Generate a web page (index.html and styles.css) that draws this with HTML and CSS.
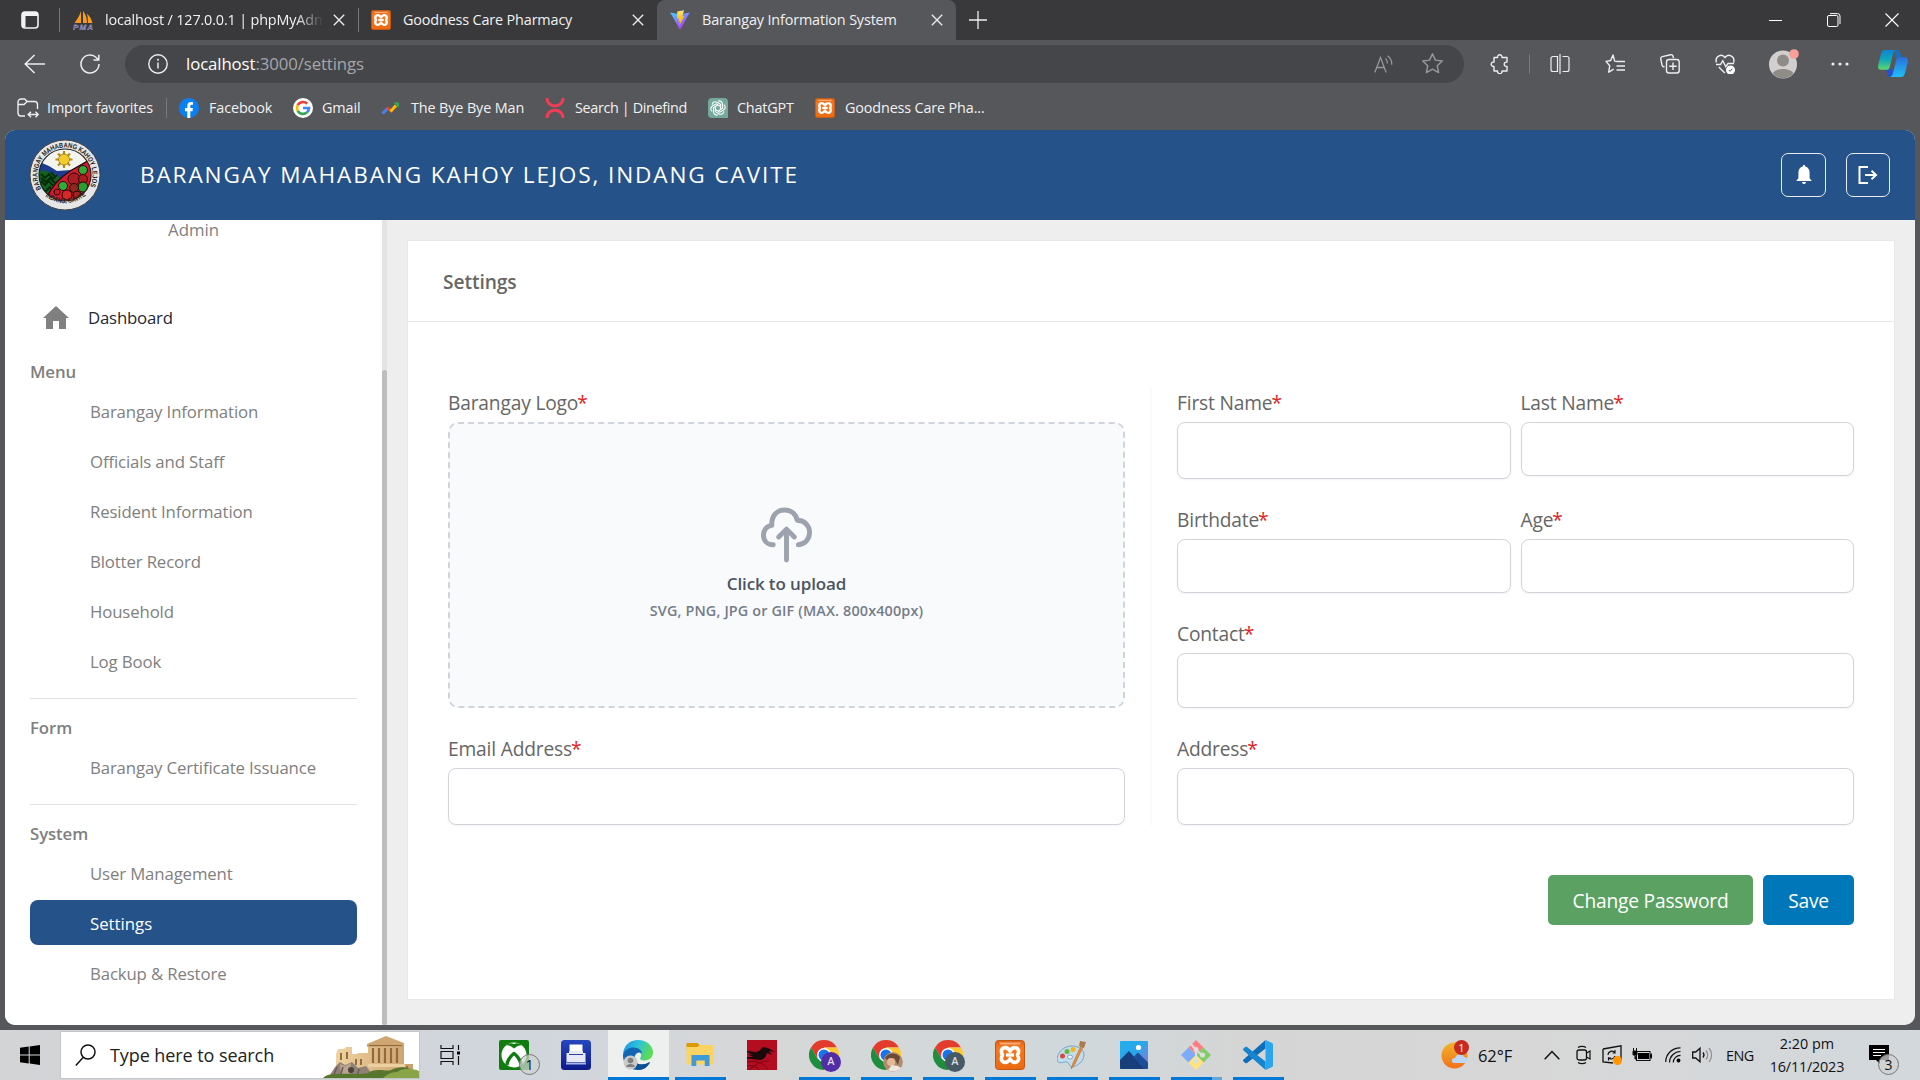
FILE: index.html
```html
<!DOCTYPE html>
<html lang="en">
<head>
<meta charset="utf-8">
<title>Barangay Information System</title>
<link rel="stylesheet" href="styles.css">
</head>
<body>
<svg class="defs" width="0" height="0" aria-hidden="true">
  <defs>
    <linearGradient id="orange" x1="0" y1="0" x2="0" y2="1"><stop offset="0" stop-color="#d9631a"/><stop offset=".25" stop-color="#f9781c"/><stop offset="1" stop-color="#ea6a14"/></linearGradient>
    <linearGradient id="vite" x1="0" y1="0" x2=".6" y2="1"><stop offset="0" stop-color="#41d1ff"/><stop offset="1" stop-color="#bd34fe"/></linearGradient>
    <linearGradient id="bolt" x1="0" y1="0" x2="0" y2="1"><stop offset="0" stop-color="#ffea83"/><stop offset=".4" stop-color="#ffcb20"/><stop offset="1" stop-color="#ffa800"/></linearGradient>
    <linearGradient id="edgeTop" x1="0" y1="0" x2="1" y2=".3"><stop offset="0" stop-color="#1b8fd8"/><stop offset=".5" stop-color="#2cc0e0"/><stop offset="1" stop-color="#5bdc55"/></linearGradient>
    <linearGradient id="photo" x1="0" y1="0" x2="1" y2="1"><stop offset="0" stop-color="#1fb0ef"/><stop offset=".5" stop-color="#2ba5e8"/><stop offset="1" stop-color="#a56bd0"/></linearGradient>
    <linearGradient id="sun" x1="0" y1="0" x2="0" y2="1"><stop offset="0" stop-color="#efb52c"/><stop offset="1" stop-color="#f3701a"/></linearGradient>
    <linearGradient id="copA" x1="0" y1="0" x2="0" y2="1"><stop offset="0" stop-color="#0e83d8"/><stop offset=".5" stop-color="#12a8b8"/><stop offset="1" stop-color="#62d86a"/></linearGradient>
    <linearGradient id="copB" x1="0" y1="0" x2="0" y2="1"><stop offset="0" stop-color="#2b6fdc"/><stop offset="1" stop-color="#1fc0f5"/></linearGradient>
    <linearGradient id="fax" x1="0" y1="0" x2="0" y2="1"><stop offset="0" stop-color="#2747bf"/><stop offset="1" stop-color="#0c1a86"/></linearGradient>
    <linearGradient id="stone" x1="0" y1="0" x2="1" y2="0"><stop offset="0" stop-color="#f0d3a0"/><stop offset="1" stop-color="#c8a070"/></linearGradient>
    <symbol id="xampp" viewBox="0 0 30 30">
      <rect x=".5" y=".5" width="29" height="29" rx="3" fill="url(#orange)" stroke="#c4570f"/>
      <path d="M4 2.500h22l-1.500 2h-19z" fill="#ffb98a" opacity=".8"/>
      <path d="M8.500 8c2.800-1 5 .5 6.500 3.200 1.500-2.700 3.700-4.200 6.500-3.200 3 1.300 2.300 5 1 7 1.300 2 2 5.700-1 7-2.800 1-5-.5-6.500-3.200-1.500 2.700-3.700 4.200-6.500 3.200-3-1.300-2.300-5-1-7-1.300-2-2-5.700 1-7z" fill="none" stroke="#fff" stroke-width="3.600" stroke-linejoin="round"/>
      <path d="M11 15h8" stroke="#fff" stroke-width="3.400"/>
    </symbol>
    <symbol id="chrome" viewBox="0 0 30 30">
      <path d="M2 7.500A15 15 0 0 1 28 7.500H15L8.500 18.700z" fill="#e33b2e"/>
      <path d="M28 7.500A15 15 0 0 1 15 30l6.500-11.300L15 7.500z" fill="#fcc934"/>
      <path d="M15 30A15 15 0 0 1 2 7.500l6.500 11.300H21.500z" fill="#1e8e3e"/>
      <circle cx="15" cy="15" r="7" fill="#fff"/><circle cx="15" cy="15" r="5.500" fill="#1a73e8"/>
    </symbol>
    <symbol id="closeX" viewBox="0 0 12 12"><path d="M.8.800l10.400 10.400M11.200.800L.8 11.200" stroke="#e8e8e8" stroke-width="1.400"/></symbol>
  </defs>
</svg>

<div class="screen">
  <div class="tabstrip">
    <svg class="tab-menu" viewBox="0 0 18 18"><rect x="1" y="1" width="16" height="16" rx="3" fill="none" stroke="#f2f2f2" stroke-width="1.600"/><path d="M1 3a2 2 0 0 1 2-2h12a2 2 0 0 1 2 2v2H1zM1 5h3.500v11H1z" fill="#f2f2f2"/></svg>
    <div class="tab tab-1">
      <svg class="fav" viewBox="0 0 20 20"><path d="M8 1v12H1.500C4 9 6.500 6 8 1zM10 1c3 3.500 4 8 4 12h-4zM14 3.500c3 3 4.500 6 5.500 9.500h-4.500c0-4-.4-6-1-9.500z" fill="#f89c1c"/><text x="0" y="19.500" class="pma" textLength="20">PMA</text></svg>
      <span class="tab-title faded">localhost / 127.0.0.1 | phpMyAdmin</span>
      <svg class="x"><use href="#closeX"/></svg>
    </div>
    <div class="tab tab-2">
      <svg class="fav"><use href="#xampp"/></svg>
      <span class="tab-title">Goodness Care Pharmacy</span>
      <svg class="x"><use href="#closeX"/></svg>
    </div>
    <div class="tab tab-3">
      <svg class="fav" viewBox="0 0 20 20"><path d="M.2 2.500l9.800 17.300L19.800 2.500 10 4.200z" fill="url(#vite)"/><path d="M14 .2L7.300 1.500 7 8.800l2-.4-.6 3 1.500-.4-.7 4.600L14.500 6l-2.200.4z" fill="url(#bolt)"/></svg>
      <span class="tab-title">Barangay Information System</span>
      <svg class="x"><use href="#closeX"/></svg>
    </div>
    <svg class="plus" viewBox="0 0 18 18"><path d="M9 0v18M0 9h18" stroke="#eee" stroke-width="1.300"/></svg>
    <div class="winbtns">
      <svg viewBox="0 0 14 14"><path d="M0 7.500h13" stroke="#fff" stroke-width="1"/></svg>
      <svg viewBox="0 0 14 14"><rect x=".5" y="2.500" width="10.500" height="11" rx="1.500" fill="none" stroke="#fff"/><path d="M3 .6h7.500a2.500 2.500 0 0 1 2.500 2.500v8" fill="none" stroke="#fff"/></svg>
      <svg viewBox="0 0 14 14"><path d="M.5.500l13 13M13.500.500l-13 13" stroke="#fff" stroke-width="1.100"/></svg>
    </div>
  </div>

  <div class="toolbar">
    <svg class="back" viewBox="0 0 21 20"><path d="M21 10H1.200M10.500 1L1.200 10l9.300 9" fill="none" stroke="#eee" stroke-width="1.500"/></svg>
    <svg class="reload" viewBox="0 0 20 20"><path d="M19 10a9 9 0 1 1-2.800-6.500l2.300 2.200M18.800.800v5.200h-5.300" fill="none" stroke="#eee" stroke-width="1.500"/></svg>
    <div class="address">
      <svg class="info" viewBox="0 0 20 20"><circle cx="10" cy="10" r="9.200" fill="none" stroke="#eee" stroke-width="1.400"/><path d="M10 8.500v6" stroke="#eee" stroke-width="1.500"/><circle cx="10" cy="5.800" r="1" fill="#eee"/></svg>
      <span class="url"><b>localhost</b>:3000/settings</span>
      <svg class="aloud" viewBox="0 0 19 18"><path d="M.8 17.500L6.500 2.500l5.700 15M2.800 12.500h7.500M11.500 3.500c1.500 1.200 2 3 1.900 5M13.500.700c3 2 4.500 5 4.200 9" fill="none" stroke="#96979a" stroke-width="1.300"/></svg>
      <svg class="star" viewBox="0 0 20 20"><path d="M10 .8l2.800 6 6.500.8-4.800 4.500 1.300 6.500-5.800-3.200-5.800 3.200 1.300-6.500L.7 7.600l6.500-.8z" fill="none" stroke="#96979a" stroke-width="1.400" stroke-linejoin="round"/></svg>
    </div>
    <div class="tools">
      <div class="tool puzzle"><svg viewBox="0 0 20 20"><path d="M4 3.500h3.500a2.300 2.300 0 1 1 4.500 0h5V8a2.300 2.300 0 1 0 0 4.500v4.500H12a2.300 2.300 0 1 1-4.500 0H4V12.500a2.300 2.300 0 1 1 0-4.500z" fill="none" stroke="#eee" stroke-width="1.400" stroke-linejoin="round"/></svg></div>
      <div class="tool split"><svg viewBox="0 0 20 20"><path d="M7.500 2.500H3a2 2 0 0 0-2 2v11a2 2 0 0 0 2 2h4.500zM12.500 2.500H17a2 2 0 0 1 2 2v11a2 2 0 0 1-2 2h-4.500M10 0v20" fill="none" stroke="#eee" stroke-width="1.200"/></svg></div>
      <div class="tool"><svg viewBox="0 0 20 20"><path d="M12.500 7.500l-2.800-.4L8 1 5.700 6.500 1 7.400l3.700 4.400-1 6.400 5-3M12.500 7.500H20M11.500 12H20M11.500 16H20" fill="none" stroke="#eee" stroke-width="1.400" stroke-linejoin="round"/></svg></div>
      <div class="tool"><svg viewBox="0 0 20 20"><path d="M4.500 13L3 12.500a2 2 0 0 1-1-1.500L.8 5a2 2 0 0 1 1.500-2.400L10.500.800A2 2 0 0 1 13 2.200l.4 2" fill="none" stroke="#eee" stroke-width="1.400"/><rect x="6.500" y="5.500" width="12.700" height="13.500" rx="2.500" fill="none" stroke="#eee" stroke-width="1.400"/><path d="M13 8.500v7.500M9.200 12.200h7.500" stroke="#eee" stroke-width="1.400"/></svg></div>
      <div class="tool"><svg viewBox="0 0 20 20"><path d="M1.300 8.500C-.2 1.500 7-.8 10 3.500c3-4.300 10.200-2 8.700 5M1 10.500h4.500l2.300-3.800 3 6L13 9.500h6M3.800 13l6 6" fill="none" stroke="#eee" stroke-width="1.400"/><circle cx="15.500" cy="16" r="4.500" fill="#fff"/><path d="M13.800 16l1.300 1.300 2.200-2.600" stroke="#555" fill="none"/></svg></div>
      <div class="tool person"><svg viewBox="0 0 32 30"><circle cx="15" cy="15.500" r="14" fill="#d2d0ce"/><circle cx="15" cy="11.500" r="6" fill="#8f8b87"/><path d="M4.500 24.500C7 18.500 23 18.500 25.500 24.500a14 14 0 0 1-21 0z" fill="#8f8b87"/><circle cx="26" cy="5" r="4.800" fill="#f99f9a"/></svg></div>
      <div class="tool"><svg viewBox="0 0 20 20"><g fill="#eee"><circle cx="3" cy="10" r="1.600"/><circle cx="10" cy="10" r="1.600"/><circle cx="17" cy="10" r="1.600"/></g></svg></div>
      <div class="tool copilot"><svg viewBox="0 0 30 27"><path d="M17 0h2c2 0 3 1 3.500 4l1 4h-6z" fill="#176fc0"/><path d="M8 19h6l3 8h-4c-2 0-3-1-3.500-3z" fill="#2450d0"/><path d="M7 0h11c-2 1-2.500 2-3 4l-3.300 13c-.5 2-1.500 2.800-3 2.800H3C.5 19.800-.3 18 .2 15L3 4c.7-2.800 2-4 4-4z" fill="url(#copA)"/><path d="M23 27H12c2-1 2.500-2 3-4l3.300-13c.5-2 1.500-2.800 3-2.800H27c2.500 0 3.300 1.800 2.800 4.800L27 23c-.7 2.800-2 4-4 4z" fill="url(#copB)"/></svg></div>
    </div>
  </div>

  <div class="bookmarks">
    <div class="bm bm-import"><svg viewBox="0 0 22 20"><path d="M8 18H4a3 3 0 0 1-3-3V4a3 3 0 0 1 3-3h3.500l3 2.500h7a3 3 0 0 1 3 3V11M1 6.500h6l3-3M12 16.500h9M14 13.700l-2.800 2.800 2.800 2.800M18.500 13.700l2.800 2.800-2.800 2.800" fill="none" stroke="#eee" stroke-width="1.400"/></svg><span>Import favorites</span></div>
    <div class="bm bm-fb"><svg viewBox="0 0 20 20"><circle cx="10" cy="10" r="10" fill="#0a80f5"/><path d="M8.300 20v-6.800H6V10h2.300V8c0-2.600 1.400-4 3.700-4l2 .2v2.600h-1.200c-1.200 0-1.500.7-1.500 1.500V10h2.600l-.4 3.200h-2.200V20z" fill="#fff"/></svg><span>Facebook</span></div>
    <div class="bm bm-gmail"><svg viewBox="0 0 20 20"><circle cx="10" cy="10" r="10" fill="#fff"/><g fill="none" stroke-width="2.700"><path d="M14.200 5.700A6 6 0 0 0 4.700 7.200" stroke="#ea4335"/><path d="M4.700 7.200a6 6 0 0 0 0 5.600" stroke="#fbbc05"/><path d="M4.700 12.800a6 6 0 0 0 9.200 1.700" stroke="#34a853"/><path d="M13.900 14.500A6 6 0 0 0 16 10h-6" stroke="#4285f4"/></g></svg><span>Gmail</span></div>
    <div class="bm bm-bye"><svg viewBox="0 0 20 20"><path d="M1.500 15.500L7 10" stroke="#4285f4" stroke-width="3"/><path d="M6 9.500l4.500 4" stroke="#ea4335" stroke-width="3"/><path d="M9.500 13.500L15 7.500" stroke="#fbbc05" stroke-width="3"/><path d="M12.500 4.500H18V10z" fill="#34a853"/></svg><span>The Bye Bye Man</span></div>
    <div class="bm bm-dine"><svg viewBox="0 0 20 20"><path d="M2 0c0 10.500 16 10.500 16 0M2 20C2 9.500 18 9.500 18 20" fill="none" stroke="#f43b55" stroke-width="3"/></svg><span>Search | Dinefind</span></div>
    <div class="bm bm-gpt"><svg viewBox="0 0 20 20"><path d="M4 0h12a4 4 0 0 1 4 4v16H4a4 4 0 0 1-4-4V4a4 4 0 0 1 4-4z" fill="#74aa9c"/><g fill="none" stroke="#fff" stroke-width="1.100"><path id="petal" d="M10 3.200a3.200 3.200 0 0 1 4.500 3V10.500l-4 2.300"/><use href="#petal" transform="rotate(60 10 10)"/><use href="#petal" transform="rotate(120 10 10)"/><use href="#petal" transform="rotate(180 10 10)"/><use href="#petal" transform="rotate(240 10 10)"/><use href="#petal" transform="rotate(300 10 10)"/></g></svg><span>ChatGPT</span></div>
    <div class="bm bm-xampp"><svg><use href="#xampp"/></svg><span>Goodness Care Pha...</span></div>
  </div>

  <div class="page">
    <header class="header">
      <svg class="seal" viewBox="0 0 72 72">
        <defs><clipPath id="sealClip"><circle cx="36" cy="36" r="26"/></clipPath><path id="arcTop" d="M12.300 50A27.500 27.500 0 1 1 59.700 50"/><path id="arcBottom" d="M9.500 50A32 32 0 0 0 62.500 50"/></defs>
        <circle cx="36" cy="36" r="35" fill="#e6e6e6" stroke="#444" stroke-width="1"/>
        <g clip-path="url(#sealClip)">
          <rect width="72" height="72" fill="#f4f4ef"/>
          <path d="M8 22l12 5 8 5 14-1-6 20H8z" fill="#1d3c8f"/>
          <path d="M8 34l6-3 14 5 6 6-10 24L8 60z" fill="#14601f"/>
          <path d="M12 35l4 4 4-4 4 5 4-4M12 42l4 4 4-4 4 5 5-5M12 49l4 4 5-5 3 5M22 33l4 5M12 39l5 4 4-4 5 5" stroke="#052a0a" stroke-width="1.800" fill="none"/>
          <path d="M16 64c3-14 12-24 25-32l22-13v50z" fill="#d21c2b"/>
          <path d="M17 60c5-12 12-20 24-28l21-12" stroke="#111" stroke-width="1.200" fill="none"/>
          <g stroke="#260909" stroke-width="1"><circle cx="45" cy="40" r="6" fill="#a81c22"/><circle cx="34" cy="47" r="4.500" fill="#2fae35"/><circle cx="54" cy="31" r="4.500" fill="#31a936"/><circle cx="54" cy="40" r="4.500" fill="#a71f20"/><circle cx="54" cy="48" r="5" fill="#2b9e31"/><circle cx="45" cy="49" r="4.500" fill="#8e2a1d"/><circle cx="38" cy="56" r="5" fill="#d42928"/><circle cx="28" cy="53" r="3" fill="#c61a22"/><circle cx="48" cy="56" r="4" fill="#a5221e"/></g>
          <g stroke="#b18c0e" stroke-width="2.200"><path d="M35 12v17M26.500 20.500h17M29 14.500l12 12M41 14.500l-12 12"/></g><circle cx="35" cy="20.500" r="5.500" fill="#f2cc2d" stroke="#8d7013" stroke-width=".7"/>
        </g>
        <circle cx="36" cy="36" r="26" fill="none" stroke="#222" stroke-width="1.200"/>
        <text class="seal-text"><textPath href="#arcTop" textLength="112" lengthAdjust="spacingAndGlyphs">BARANGAY MAHABANG KAHOY LEJOS</textPath></text>
        <text class="seal-text"><textPath href="#arcBottom" startOffset="10" textLength="44" lengthAdjust="spacingAndGlyphs">INDANG, CAVITE</textPath></text>
      </svg>
      <h1>BARANGAY MAHABANG KAHOY LEJOS, INDANG CAVITE</h1>
      <div class="hbtn hbtn-bell"><svg viewBox="0 0 16 20"><path d="M8 0c.9 0 1.300.6 1.300 1.500 2.800.7 4.300 3 4.300 6.200v5.500L15.800 16H.2l2.200-2.800V7.700c0-3.200 1.500-5.500 4.300-6.200C6.700.600 7.100 0 8 0zM6 17h4c0 1.300-.8 2-2 2s-2-.7-2-2z" fill="#fff"/></svg></div>
      <div class="hbtn"><svg class="exit" viewBox="0 0 20 18"><path d="M10 1H1.500v16H10M7 9h11M13.500 4.800L18 9l-4.500 4.200" fill="none" stroke="#fff" stroke-width="2"/></svg></div>
    </header>
    <div class="body">
      <aside class="sidebar">
        <nav>
          <p class="role">Admin</p>
          <a class="dash"><svg viewBox="0 0 26 23"><path d="M13 0L26 12h-3v11h-7v-8h-6v8H3V12H0z" fill="#808080"/></svg><span>Dashboard</span></a>
          <h2>Menu</h2>
          <a class="item">Barangay Information</a>
          <a class="item">Officials and Staff</a>
          <a class="item">Resident Information</a>
          <a class="item">Blotter Record</a>
          <a class="item">Household</a>
          <a class="item">Log Book</a>
          <hr>
          <h2>Form</h2>
          <a class="item">Barangay Certificate Issuance</a>
          <hr>
          <h2>System</h2>
          <a class="item">User Management</a>
          <a class="item active">Settings</a>
          <a class="item">Backup &amp; Restore</a>
        </nav>
        <div class="scroll"><div class="thumb"></div></div>
      </aside>
      <main>
        <section class="card">
          <div class="card-head">Settings</div>
          <div class="form">
            <div class="col">
              <label>Barangay Logo<i>*</i></label>
              <div class="drop">
                <svg viewBox="0 0 52 56"><g fill="none" stroke="#9ca3af" stroke-width="5" stroke-linecap="round" stroke-linejoin="round"><path d="M12.500 38C6 38 2.500 33.500 2.500 28c0-5 3.500-9.500 8.500-9.800C10.500 8.500 16 2.500 24 2.500c6.500 0 11.500 4 13 10.500C44 13 49.500 18 49.500 25.500c0 6.500-4.500 12-11.500 12.500"/><path d="M26 53.500V23M18 30l8-8 8 8"/></g></svg>
                <strong>Click to upload</strong>
                <small>SVG, PNG, JPG or GIF (MAX. 800x400px)</small>
              </div>
              <label class="l-last">Email Address<i>*</i></label>
              <div class="input h57"></div>
            </div>
            <div class="rule"></div>
            <div class="col">
              <div class="pair">
                <div><label>First Name<i>*</i></label><div class="input h57"></div></div>
                <div><label>Last Name<i>*</i></label><div class="input h54"></div></div>
              </div>
              <div class="pair second">
                <div><label>Birthdate<i>*</i></label><div class="input h54"></div></div>
                <div><label>Age<i>*</i></label><div class="input h54"></div></div>
              </div>
              <label class="l-contact">Contact<i>*</i></label>
              <div class="input h55"></div>
              <label class="l-last">Address<i>*</i></label>
              <div class="input h57"></div>
            </div>
          </div>
          <div class="actions"><button class="green">Change Password</button><button class="blue">Save</button></div>
        </section>
      </main>
    </div>
  </div>

  <div class="taskbar">
    <div class="start"><svg viewBox="0 0 20 20"><path d="M0 2.800L8.700 1.500v8H0zM9.700 1.400L20 0v9.500H9.700zM0 10.500h8.700v8L0 17.200zM9.700 10.500H20V20L9.700 18.600z"/></svg></div>
    <div class="search">
      <svg class="mag" viewBox="0 0 21 22"><circle cx="13" cy="8" r="7" fill="none" stroke="#111" stroke-width="1.500"/><path d="M8.300 13.200L.8 21.400" stroke="#111" stroke-width="1.500"/></svg>
      <span>Type here to search</span>
      <svg class="acro" viewBox="0 0 96 42"><path d="M13 30V18l2-5h6l2-2h6v7h4l3-1h9V9L63 2l18 7v19h9v12H13z" fill="url(#stone)"/><path d="M44 8L63 0l18 7v4H44z" fill="#cfa672"/><path d="M46 9.500h33" stroke="#8f683a" stroke-width="1"/><path d="M50 12v15M56 12v15M62 12v15M68 12v15M74 12v15" stroke="#94693a" stroke-width="2.200"/><path d="M38 23v6M33 23v6M18 17v7M24 16v7M84 30v6" stroke="#936c42" stroke-width="2"/><path d="M45 28h37v3H45z" fill="#ecd0a0"/><path d="M5 42l7-11 5-5 5 3 7-3 6 6 8-2 6 8v4z" fill="#8f8178"/><path d="M17 28l5 2 6-3-2 13h-8z" fill="#bba48f"/><circle cx="28" cy="34" r="3" fill="#4d413b"/><path d="M14 31l-4 10M20 31l-3 10M36 33l-2 8" stroke="#675b54" stroke-width="1.500"/><path d="M0 42c3-4 11-4 15-4 10-1 21 1 30-1 8-6 18-1 23-3 9-4 17-4 28 4v4z" fill="#56752d"/><path d="M60 42c3-3 8-6 14-6 8-5 17-3 22-1v7z" fill="#8aa548"/></svg>
    </div>
    <div class="taskview"><svg viewBox="0 0 20 20"><path d="M1 0v3.500h12V0M1 20v-3.500h12V20M1 6.500h12v7H1zM18.500 0v5M18.500 11v9" fill="none" stroke="#111" stroke-width="1.200"/><rect x="17" y="6.500" width="3" height="3"/></svg></div>
    <div class="apps">
      <div class="app"><svg viewBox="0 0 30 30"><rect width="30" height="30" rx="2" fill="#107c10"/><circle cx="15" cy="15" r="12.500" fill="#fff"/><path d="M15 8.500C11.500 5.500 8.500 4.500 6.500 5.500c2.500-2.500 6-3 8.500-1.500 2.500-1.500 6-1 8.500 1.500-2-1-5 0-8.500 3zM15 11.500c5 3.500 9 9 8.500 13l-3 1C20 21 17 17.500 15 15.500c-2 2-5 5.500-5.500 10l-3-1c-.5-4 3.500-9.500 8.500-13z" fill="#107c10"/></svg><b class="count">1</b></div>
      <div class="app"><svg viewBox="0 0 30 30"><rect width="30" height="30" rx="3.500" fill="url(#fax)"/><path d="M8.500 4.500h13v9h-13z" fill="#fff"/><path d="M5.500 13h19v9h-19zM8 11h14v5H8z" fill="#e7eaf6"/><path d="M5 22.500h20v2H5z" fill="#a9b5e6"/><path d="M8 14.500h14" stroke="#2943a5"/></svg></div>
      <div class="app run current"><svg viewBox="0 0 30 30"><path d="M0 14C1 5 7 0 15 0c9 0 15 6 15 12.500 0 5-4 8-8.500 8-4 0-5-1.500-4-3 2-3-1-8-7-8C5 9.500 2 12 0 14z" fill="url(#edgeTop)"/><path d="M0 15c1-5 6-7.500 10.500-7.500 5 0 8.500 3 8.500 6-2-2-7-1-7.500 4C11 24 18 27 27 22c-2 5-7 8-12 8C6 30-.5 23 0 15z" fill="#1267b5"/><path d="M11.500 17.500C11 24 18 27 27 22c-2 5-7 8-12 8-5-2-6-8-3.500-12.500z" fill="#0c4f93"/><circle cx="7.500" cy="22.500" r="7" fill="#c9c9c9"/><circle cx="7.500" cy="20.500" r="2.800" fill="#7e7e7e"/><path d="M3 27c1-4 8-4 9 0z" fill="#7e7e7e"/></svg></div>
      <div class="app run"><svg viewBox="0 0 30 30"><path d="M1.500 3h11l3 3-3 3h-11z" fill="#dd9a06"/><path d="M1.500 7h11l2-2h14v19.500h-27z" fill="#fdd363"/><path d="M6.500 26V15h18v11h-4.700v-5.500h-8.500V26z" fill="#3e9ad9"/></svg></div>
      <div class="app"><svg viewBox="0 0 30 30"><rect width="30" height="30" fill="#b50d20"/><path d="M0 11c5 0 8 2 12 0l4-4 5 1 7 4-6-1 3 4-5-2c-1 3-2 6-6 7-5 0-9-2-14-1v-2l6 0-6-3 6 1-6-3z" fill="#19090b"/><path d="M0 22c8-2 17 0 21 8M0 26c6-1 10 1 12 4M2 30c8-6 10-9 20-9" stroke="#760614" fill="none"/></svg></div>
      <div class="app run"><svg><use href="#chrome"/></svg><b class="profile purple">A</b></div>
      <div class="app run"><svg><use href="#chrome"/></svg><svg class="profile" viewBox="0 0 20 20"><circle cx="10" cy="10" r="10" fill="#b08d70"/><path d="M2 6a9 9 0 0 1 15-1l-2 8-4-7-6 3z" fill="#6b4a36"/><circle cx="8" cy="10" r="4" fill="#e5b794"/><path d="M5 18l4-5 6 1 3 2a10 10 0 0 1-13 2z" fill="#f0e6df"/></svg></div>
      <div class="app run"><svg><use href="#chrome"/></svg><b class="profile slate">A</b></div>
      <div class="app run"><svg><use href="#xampp"/></svg></div>
      <div class="app run"><svg viewBox="0 0 30 30"><path d="M15 6c7 0 12 4 12 9 0 6-6 11-12 12-3 0-2-4-5-5-3-.5-9 3-10-2C0 12 7 6 15 6z" fill="#c2dcee" stroke="#76a5c5"/><ellipse cx="13" cy="17" rx="2.500" ry="2" fill="#eef5f9" stroke="#83aac2"/><circle cx="5.500" cy="16" r="2.500" fill="#dc4740"/><circle cx="10" cy="11.500" r="2.500" fill="#62b73c"/><circle cx="16" cy="9.500" r="2.500" fill="#f2b51c"/><path d="M14 29l2-6 8-17 2 1-8 17z" fill="#eb8a2f" stroke="#b66018" stroke-width=".5"/><path d="M22 6l1-5 6 1-2 6z" fill="#a97b4e"/></svg></div>
      <div class="app run"><svg viewBox="0 0 30 30"><rect x="1" y="1" width="28" height="28" rx="1" fill="url(#photo)"/><path d="M1 20l9-9 16 18H2a1 1 0 0 1-1-1z" fill="#173f7c"/><path d="M15 16.500l4-4 10 10v5.500a1 1 0 0 1-1 1h-3z" fill="#1b4e96"/><circle cx="19.500" cy="7.500" r="2.600" fill="#fff"/></svg></div>
      <div class="app run multi"><svg viewBox="0 0 30 30"><path d="M15 0l7.500 7.500L15 15 7.500 7.500z" fill="#fb7f80"/><path d="M22.500 7.500L30 15l-7.500 7.500L15 15z" fill="#82ce66"/><path d="M7.500 7.500L15 15l-7.500 7.500L0 15z" fill="#7cabfb"/><path d="M15 15l7.500 7.500L15 30l-7.500-7.500z" fill="#ffe37c"/><path d="M10 4l5 6v11M15 10l6 5" stroke="#dedede" stroke-width="2" fill="none"/><g fill="#dedede"><circle cx="15" cy="9.500" r="2.500"/><circle cx="15" cy="21" r="2.500"/><circle cx="21.500" cy="15" r="2.500"/></g></svg></div>
      <div class="app run"><svg viewBox="0 0 30 30"><path d="M22.500 0v8.500L4 23c-.6.500-1.300.4-1.800 0L.5 21.500c-.6-.6-.6-1.400 0-2z" fill="#0e6fb8"/><path d="M22.500 30v-8.500L4 7c-.6-.5-1.300-.4-1.800 0L.5 8.500c-.6.600-.6 1.400 0 2z" fill="#1585cf"/><path d="M22.500 0L29 3c.6.300 1 .8 1 1.500v21c0 .7-.4 1.200-1 1.500l-6.500 3z" fill="#2aa5ee"/></svg></div>
    </div>
    <div class="tray">
      <svg class="weather" viewBox="0 0 30 30"><circle cx="13.500" cy="15.500" r="13" fill="url(#sun)"/><path d="M13 23c-3 0-3-5 1-5 2-5 8-5 9-1 4-1 5 6 1 6z" fill="#bcd5f8"/><circle cx="20.500" cy="7.500" r="7.500" fill="#c92a20"/><text x="20.500" y="12" class="wnum">1</text></svg>
      <span class="temp">62°F</span>
      <svg class="chev" viewBox="0 0 16 10"><path d="M.7 9.200L8 1.500l7.300 7.700" fill="none" stroke="#111" stroke-width="1.500"/></svg>
      <svg class="cam" viewBox="0 0 15 20"><rect x="1" y="5" width="9.500" height="10" rx="2" fill="none" stroke="#111" stroke-width="1.300"/><path d="M10.500 8l3.500-2v8l-3.500-2M2 2.500c2-1.500 6-1.500 8 0M2 17.500c2 1.500 6 1.500 8 0" fill="none" stroke="#111" stroke-width="1.200"/></svg>
      <svg class="upd" viewBox="0 0 20 20"><path d="M1 4L19 .8v15M1 4v13l10 1" fill="none" stroke="#111" stroke-width="1.300"/><path d="M6 10a4 4 0 0 1 7-2.500V5M13 8h-2.500M13 11a4 4 0 0 1-6.500 2v2.500M6.500 13H9" fill="none" stroke="#111" stroke-width="1.100"/><circle cx="15.500" cy="15.500" r="4.500" fill="#ff9500"/></svg>
      <svg class="bat" viewBox="0 0 20 14"><rect x="4.500" y="3.500" width="13.500" height="9" fill="none" stroke="#111"/><rect x="6" y="5" width="11" height="6"/><path d="M18.500 6h1.500v4h-1.500zM1 3h4v4H1zM1.500 0v3M4.500 0v3M3 7v4h2" stroke="#111"/></svg>
      <svg class="wifi" viewBox="0 0 16 16"><path d="M.7 15A14.300 14.300 0 0 1 15.500.8M4.500 15.500A11 11 0 0 1 15.500 4.500M8.300 15.500a7.300 7.300 0 0 1 7.200-7.200" fill="none" stroke="#111" stroke-width="1.200"/><circle cx="13.500" cy="13.500" r="1.900"/></svg>
      <svg class="vol" viewBox="0 0 21 18"><path d="M.7 6h3L8 2.200v13.600L3.700 12h-3zM11 6.500c1.200 1.500 1.200 3.500 0 5" fill="none" stroke="#111" stroke-width="1.300"/><path d="M14 4.500c2.200 2.500 2.200 6.500 0 9M17 2c3.400 4 3.400 10 0 14" fill="none" stroke="#8d8d8d" stroke-width="1.200"/></svg>
      <span class="lang">ENG</span>
      <div class="clock"><span class="time">2:20 pm</span><span class="date">16/11/2023</span></div>
      <div class="notif"><svg viewBox="0 0 20 19"><path d="M0 0h20v15h-9v4l-4-4H0z"/><path d="M4 4.500h12M4 7.500h12M4 10.500h8" stroke="#fff" stroke-width="1.200"/></svg><b class="count">3</b></div>
    </div>
  </div>
</div>
</body>
</html>
```
FILE: styles.css
```css
* { box-sizing: border-box; }
body { margin: 0; font-family: "Open Sans", "Noto Sans", sans-serif; background: #56575b; }
svg { display: block; flex: none; }
.defs { position: absolute; }
p, h1, h2, hr { margin: 0; }
.screen { width: 1920px; height: 1080px; overflow: hidden; display: flex; flex-direction: column; white-space: nowrap; }

/* tab strip */
.tabstrip { height: 40px; background: #39393c; display: flex; align-items: center; flex: none; color: #f1f1f1; font-size: 14.4px; }
.tab-menu { width: 18px; height: 18px; margin: 0 20px 0 21px; }
.tab { display: flex; align-items: center; height: 40px; }
.tab-1, .tab-2 { background: linear-gradient(#77777a, #77777a) left center / 1px 24px no-repeat; }
.tab-1 { width: 299px; padding-left: 14px; }
.tab-2 { width: 299px; padding-left: 13px; }
.tab-3 { width: 299px; padding-left: 13px; background: #56575b; border-radius: 8px 8px 0 0; }
.fav { width: 20px; height: 20px; margin-right: 12px; }
.tab-title { width: 229px; overflow: hidden; letter-spacing: -.15px; line-height: 24px; }
.tab-1 .tab-title { width: 218px; margin-right: 10px; }
.faded { -webkit-mask: linear-gradient(90deg, #000 88%, transparent); mask: linear-gradient(90deg, #000 88%, transparent); }
.x { width: 12px; height: 12px; }
.plus { width: 18px; height: 18px; margin-left: 13px; }
.pma { font: italic bold 8px "Liberation Sans", sans-serif; fill: #4b4b93; stroke: #c9c9e6; stroke-width: .3px; }
.winbtns { margin-left: auto; margin-right: 21px; display: flex; gap: 44px; }
.winbtns svg { width: 14px; height: 14px; }

/* toolbar */
.toolbar { height: 46px; display: flex; align-items: center; flex: none; padding: 1px 0 0 24px; }
.back { width: 21px; height: 20px; margin-right: 35px; }
.reload { width: 20px; height: 20px; margin-right: 25px; }
.address { width: 1339px; height: 38px; border-radius: 19px; background: #454649; display: flex; align-items: center; padding: 0 21px 0 23px; }
.info { width: 20px; height: 20px; margin-right: 18px; }
.url { font-size: 16.8px; color: #a6a7a9; flex: 1; letter-spacing: -.1px; padding-bottom: 1px; }
.url b { font-weight: 400; color: #fff; }
.aloud { width: 19px; height: 18px; margin-right: 29px; }
.star { width: 21px; height: 21px; }
.tools { display: flex; align-items: center; padding-left: 8px; }
.tool { width: 55px; display: flex; justify-content: center; }
.tool svg { width: 20px; height: 20px; }
.tool.puzzle { width: 58px; padding-right: 3px; background: linear-gradient(#77787b, #77787b) right center / 1px 20px no-repeat; }
.tool.split { width: 57px; padding-left: 2px; }
.tool.person { width: 60px; }
.tool.person svg { width: 32px; height: 30px; margin-left: 4px; }
.tool.copilot { width: 52px; }
.tool.copilot svg { width: 30px; height: 27px; }

/* favourites bar */
.bookmarks { height: 44px; display: flex; align-items: center; flex: none; padding: 0 0 1px 17px; color: #f1f1f1; font-size: 14.4px; letter-spacing: -.12px; }
.bm { display: flex; align-items: center; }
.bm svg { width: 20px; height: 20px; margin-right: 10px; }
.bm-import { width: 150px; background: linear-gradient(#77787b, #77787b) right center / 1px 20px no-repeat; margin-right: 12px; }
.bm-import svg { width: 22px; margin-right: 8px; }
.bm-fb { width: 114px; }
.bm-gmail { width: 88px; }
.bm-gmail svg { margin-right: 9px; }
.bm-bye { width: 164px; }
.bm-dine { width: 163px; }
.bm-gpt { width: 107px; }
.bm-dine, .bm-gpt { letter-spacing: -.2px; }
.bm-dine { letter-spacing: -.36px; }
.bm-gpt svg { margin-right: 9px; }
.bm-xampp { letter-spacing: -.15px; }

/* web page */
.page { height: 895px; margin: 0 5px; border-radius: 10px; overflow: hidden; background: #eee; display: flex; flex-direction: column; flex: none; }
.header { height: 90px; background: #255288; display: flex; align-items: center; padding: 0 25px 0 24px; flex: none; }
.seal { width: 72px; height: 72px; margin-right: 39px; }
.seal-text { font: bold 7px "Liberation Sans", sans-serif; fill: #222; }
h1 { flex: 1; color: #fff; font-weight: 400; font-size: 22.6px; letter-spacing: 1.870px; line-height: 32px; }
.hbtn { width: 44px; height: 44px; border: 1.250px solid #e8edf3; border-radius: 7px; display: flex; align-items: center; justify-content: center; }
.hbtn-bell { width: 45px; margin-right: 20px; }
.hbtn svg { width: 16px; height: 20px; }
.hbtn .exit { width: 20px; height: 18px; }
.body { flex: 1; display: flex; min-height: 0; }

.sidebar { width: 382px; display: flex; background: #fff; }
nav { width: 377px; padding: 0 25px; color: #808080; font-size: 16.8px; display: flex; flex-direction: column; }
.role { height: 74px; line-height: 20px; text-align: center; }
.dash { height: 49px; display: flex; align-items: center; padding: 0 0 3px 13px; color: #1f2937; letter-spacing: -.2px; }
.dash svg { width: 26px; height: 23px; margin-right: 19px; }
h2 { font-size: 16.8px; font-weight: 600; height: 45px; padding-top: 12px; line-height: 33px; letter-spacing: -.1px; }
.item { height: 45px; margin-bottom: 5px; padding: 1px 0 0 60px; line-height: 45px; border-radius: 8px; letter-spacing: -.14px; }
.item.active { background: #255288; color: #fff; letter-spacing: 0; }
hr { border: 0; height: 1px; background: #e2e2e2; margin-top: 10px; }
.scroll { width: 5px; background: #e4e4e4; padding-top: 150px; display: flex; }
.thumb { flex: 1; background: #bdbdbd; border-radius: 3px; }

main { flex: 1; padding: 20px 20px 25px 20px; display: flex; }
.card { flex: 1; background: #fff; border: 1px solid #e5e7eb; display: flex; flex-direction: column; }
.card-head { height: 81px; border-bottom: 1px solid #e5e7eb; padding-left: 35px; font-size: 19.200px; font-weight: 600; color: #666; line-height: 82px; letter-spacing: -.1px; }
.form { display: flex; padding: 65px 40px 0; height: 503px; }
.col { width: 677px; display: flex; flex-direction: column; }
.rule { width: 2px; margin: 0 25px 0 25px; background: #f9fafb; }
label { display: block; height: 35px; line-height: 32px; font-size: 19.200px; color: #666; letter-spacing: -.18px; }
label i { font-style: normal; color: #e02424; display: inline-block; margin-left: -1px; }
.drop { height: 286px; border: 2px dashed #d1d5db; border-radius: 10px; background: #f9fafc; display: flex; flex-direction: column; align-items: center; padding-top: 83px; }
.drop svg { width: 51px; height: 56px; }
.drop strong { font-size: 17px; font-weight: 600; color: #4b5563; line-height: 25px; margin-top: 8px; letter-spacing: -.12px; }
.drop small { font-size: 14.400px; font-weight: 600; color: #757c89; line-height: 20px; margin-top: 5px; letter-spacing: .14px; }
.input { border: 1px solid #d1d5db; border-radius: 8px; box-shadow: 0 1px 2px rgba(0,0,0,.05); background: #fff; flex: none; }
.h54 { height: 54px; }
.h55 { height: 55px; }
.h57 { height: 57px; }
.l-last { margin-top: 25px; }
.l-contact { margin-top: 25px; }
.pair { display: flex; gap: 10px; height: 92px; }
.pair > div { flex: 1; }
.pair.second { margin-top: 25px; height: 89px; }
.actions { margin-top: 50px; padding-right: 40px; display: flex; justify-content: flex-end; gap: 10px; }
button { height: 50px; border: 0; border-radius: 5px; color: #fff; font: 400 19.200px "Open Sans", sans-serif; padding: 1px 0 0; letter-spacing: -.2px; }
.green { width: 205px; background: #5ba162; }
.blue { width: 91px; background: #0077b8; }

/* taskbar */
.taskbar { margin-top: 5px; height: 50px; background: linear-gradient(90deg, #d3d4d6, #d1d6dd 28%, #d6d7d7 40%, #d0d8db 56%, #d5d5d5 65%, #d7d7d7 80%, #d2d8dc); display: flex; flex: none; }
.start { width: 60px; padding: 15px 0 0 20px; }
.start svg { width: 20px; height: 20px; }
.search { width: 360px; margin: 1px 0; background: #fff; border: 1px solid #c3c5c7; display: flex; align-items: center; padding-left: 14px; }
.mag { width: 21px; height: 22px; margin-right: 14px; }
.search span { font-size: 18px; flex: 1; color: #222; letter-spacing: -.08px; }
.acro { width: 96px; height: 42px; align-self: flex-end; }
.taskview { width: 63px; padding: 15px 0 0 20px; }
.taskview svg { width: 20px; height: 20px; }
.apps { display: flex; }
.app { width: 62px; position: relative; display: flex; align-items: center; justify-content: center; }
.app > svg { width: 30px; height: 30px; }
.run { background: linear-gradient(#0078d7, #0078d7) 6px bottom / 51px 3px no-repeat; }
.run.current { background: linear-gradient(#0078d7, #0078d7) 1px bottom / 61px 3px no-repeat, linear-gradient(#eef0f0, #eef0f0) 1px top / 61px 50px no-repeat; }
.run.multi { background: linear-gradient(90deg, #0078d7 41px, #5fa8e2 41px) 6px bottom / 51px 3px no-repeat; }
.count { position: absolute; width: 21px; height: 21px; border: 1px solid #777; border-radius: 50%; background: rgba(205,210,208,.75); color: #111; font-size: 14px; font-weight: 400; line-height: 19px; text-align: center; }
.app .count { left: 36px; top: 24px; }
.app .profile { position: absolute; left: 28px; top: 22px; width: 20px; height: 20px; border-radius: 50%; color: #ddd; font: 500 11px/20px Roboto, sans-serif; text-align: center; }
.purple { background: #512da8; }
.slate { background: #455a64; }
.tray { margin-left: auto; display: flex; align-items: center; padding-right: 5px; color: #111; }
.weather { width: 30px; height: 30px; margin-right: 7px; }
.wnum { font: 11px "Open Sans", sans-serif; fill: #fff; text-anchor: middle; }
.temp { width: 66px; font-size: 16.500px; letter-spacing: -.1px; }
.chev { width: 16px; height: 10px; margin-right: 16px; }
.cam { width: 15px; height: 20px; margin-right: 11px; }
.upd { width: 20px; height: 20px; margin-right: 10px; }
.bat { width: 20px; height: 14px; margin-right: 13px; }
.wifi { width: 16px; height: 16px; margin-right: 11px; }
.vol { width: 21px; height: 18px; margin-right: 13px; }
.lang { width: 41px; font-size: 14.400px; letter-spacing: -.5px; }
.clock { width: 80px; display: flex; flex-direction: column; align-items: center; font-size: 14.400px; line-height: 23px; }
.date { letter-spacing: -.2px; }
.notif { position: relative; width: 46px; margin-left: 22px; height: 20px; }
.notif svg { width: 20px; height: 19px; }
.notif .count { left: 9px; top: 9px; font-size: 14px; }
```
